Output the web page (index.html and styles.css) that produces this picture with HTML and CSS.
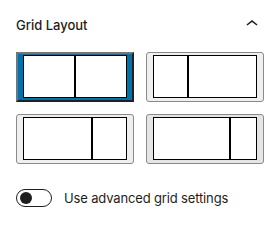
FILE: index.html
```html
<!DOCTYPE html>
<html lang="en">
<head>
    <meta charset="UTF-8">
    <meta name="viewport" content="width=device-width, initial-scale=1.0">
    <title>Grid Layout</title>
    <link rel="stylesheet" href="styles.css">
</head>
<body>
    <div class="panel">
        <div class="panel-header">
            <h2 class="panel-title">Grid Layout</h2>
            <svg class="chevron" width="24" height="24" viewBox="0 0 24 24" aria-hidden="true">
                <path d="M6.5 12.4L12 8l5.5 4.4-.9 1.2L12 10l-4.6 3.6-1-1.2z"></path>
            </svg>
        </div>
        <div class="layout-grid">
            <button class="layout-option selected" type="button">
                <span class="preview"><span class="col" style="flex: 1"></span><span class="col" style="flex: 1"></span></span>
            </button>
            <button class="layout-option" type="button">
                <span class="preview"><span class="col" style="flex: 1"></span><span class="col" style="flex: 2"></span></span>
            </button>
            <button class="layout-option" type="button">
                <span class="preview"><span class="col" style="flex: 2"></span><span class="col" style="flex: 1"></span></span>
            </button>
            <button class="layout-option hover" type="button">
                <span class="preview"><span class="col" style="flex: 3"></span><span class="col" style="flex: 1"></span></span>
            </button>
        </div>
        <label class="toggle-row">
            <span class="toggle"><span class="thumb"></span></span>
            <span class="toggle-label">Use advanced grid settings</span>
        </label>
    </div>
</body>
</html>
```
FILE: styles.css
```css
body {
    margin: 0;
    background: #fff;
    font-family: Inter, "Liberation Sans", sans-serif;
    font-size: 13px;
    color: #1e1e1e;
}
.panel {
    padding: 0 16px;
}
.panel-header {
    display: flex;
    justify-content: space-between;
    align-items: center;
    height: 48px;
}
.panel-title {
    margin: 0;
    padding-top: 2px;
    font-size: 13px;
    font-weight: 500;
    line-height: 24px;
}
.chevron {
    fill: #1e1e1e;
}
.layout-grid {
    display: grid;
    grid-template-columns: repeat(2, 1fr);
    gap: 12px;
    margin-top: 4px;
}
.layout-option {
    display: flex;
    height: 50px;
    padding: 2px 6px 3px;
    margin: 0;
    background: #efefef;
    border: 1px solid #8a8a8a;
    border-radius: 3px;
    box-sizing: border-box;
    cursor: pointer;
}
.layout-option.hover {
    background: #e5e5e5;
}
.layout-option.selected {
    background: #0073aa;
    border: 2px outset #767676;
    border-radius: 0;
    padding: 1px 5px 2px;
}
.preview {
    display: flex;
    flex: 1;
}
.col {
    background: #fff;
    border: 1px solid #000;
}
.toggle-row {
    display: flex;
    align-items: center;
    margin-top: 25px;
}
.toggle {
    display: flex;
    align-items: center;
    width: 36px;
    height: 18px;
    padding: 0 3px;
    border: 1px solid #1e1e1e;
    border-radius: 9px;
    box-sizing: border-box;
}
.thumb {
    width: 12px;
    height: 12px;
    border-radius: 50%;
    background: #1e1e1e;
}
.toggle-label {
    margin-left: 12px;
    letter-spacing: -0.15px;
}
```
